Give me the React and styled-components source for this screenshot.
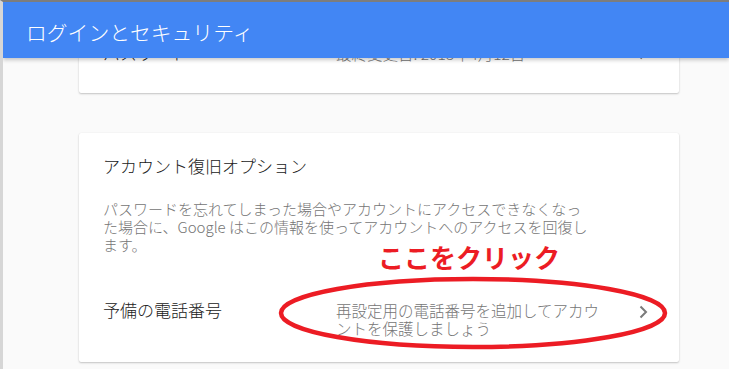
import React from 'react';
import styled, {createGlobalStyle} from "styled-components";

const GlobalStyle = createGlobalStyle`
  html, body {
    margin: 0;
    padding: 0;
    background: #fafafa;
  }
  body {
    font-family: "Noto Sans CJK JP", "Noto Sans", Roboto, sans-serif;
    -webkit-font-smoothing: antialiased;
  }
`;

const Chevron = () => (
    <ChevronBox viewBox="0 0 24 24">
        <path d="M9.5 6.5 L15 12 L9.5 17.5" fill="none" stroke="#7a7a7a" strokeWidth="2"/>
    </ChevronBox>
);

const App = () => {
    return (
        <Frame>
            <GlobalStyle/>
            <Header>ログインとセキュリティ</Header>
            <Main>
                <Card first>
                    <Row>
                        <Label>パスワード</Label>
                        <Value>最終変更日: 2018年4月12日</Value>
                        <Chevron/>
                    </Row>
                </Card>
                <Card>
                    <CardTitle>アカウント復旧オプション</CardTitle>
                    <Description>
                        パスワードを忘れてしまった場合やアカウントにアクセスできなくなった場合に、Google はこの情報を使ってアカウントへのアクセスを回復します。
                    </Description>
                    <Row spaced>
                        <Label>予備の電話番号</Label>
                        <Value>再設定用の電話番号を追加してアカウントを保護しましょう</Value>
                        <Chevron/>
                    </Row>
                    <Callout>ここをクリック</Callout>
                    <Circle viewBox="0 0 390 75">
                        <ellipse cx="195" cy="37" rx="192" ry="34" fill="none" stroke="#ec1c24" strokeWidth="4.5"/>
                    </Circle>
                </Card>
            </Main>
        </Frame>
    );
};
export default App;

const Frame = styled.div`
  width: 729px;
  height: 369px;
  box-sizing: border-box;
  border-top: 2px solid #7d7d7d;
  border-left: 3px solid #d6d6d6;
  background: #fafafa;
  overflow: hidden;
`;

const Header = styled.div`
  position: relative;
  z-index: 2;
  height: 56px;
  display: flex;
  align-items: center;
  padding: 3px 0 0 23px;
  box-sizing: border-box;
  background: #4286f4;
  color: #ffffff;
  font-size: 20.8px;
  font-weight: 300;
  box-shadow: 0 2px 4px rgba(0, 0, 0, 0.22);
`;

const Main = styled.div`
  display: flex;
  flex-direction: column;
  height: 311px;
  overflow: hidden;
  padding: 0 50px 0 76px;
`;

const Card = styled.div`
  position: relative;
  flex-shrink: 0;
  width: 600px;
  box-sizing: border-box;
  background: #ffffff;
  border-radius: 2px;
  box-shadow: 0 1px 2px rgba(0, 0, 0, 0.22), 0 0 1px rgba(0, 0, 0, 0.08);
  margin-top: ${p => p.first ? '-33px' : '40px'};
  padding: ${p => p.first ? '0 24px 12px' : '22px 24px 25px'};
`;

const CardTitle = styled.div`
  font-size: 17px;
  line-height: 22px;
  font-weight: 300;
  color: #212121;
`;

const Description = styled.div`
  margin-top: 23px;
  max-width: 490px;
  font-size: 15px;
  line-height: 18px;
  font-weight: 300;
  color: #757575;
`;

const Row = styled.div`
  display: flex;
  align-items: ${p => p.spaced ? 'flex-start' : 'center'};
  min-height: ${p => p.spaced ? '0' : '56px'};
  margin-top: ${p => p.spaced ? '47px' : '0'};
`;

const Label = styled.div`
  width: 233px;
  flex-shrink: 0;
  font-size: 17px;
  line-height: 18px;
  font-weight: 300;
  color: #212121;
`;

const Value = styled.div`
  width: 276px;
  font-size: 15.5px;
  line-height: 18px;
  font-weight: 300;
  color: #757575;
`;

const ChevronBox = styled.svg`
  width: 24px;
  height: 24px;
  margin: -1px 0 0 auto;
  flex-shrink: 0;
`;

const Callout = styled.div`
  position: absolute;
  left: 299px;
  top: 111px;
  font-size: 26px;
  line-height: 26px;
  font-weight: 700;
  color: #ec1c24;
  white-space: nowrap;
`;

const Circle = styled.svg`
  position: absolute;
  left: 199px;
  top: 143px;
  width: 390px;
  height: 75px;
  pointer-events: none;
`;
